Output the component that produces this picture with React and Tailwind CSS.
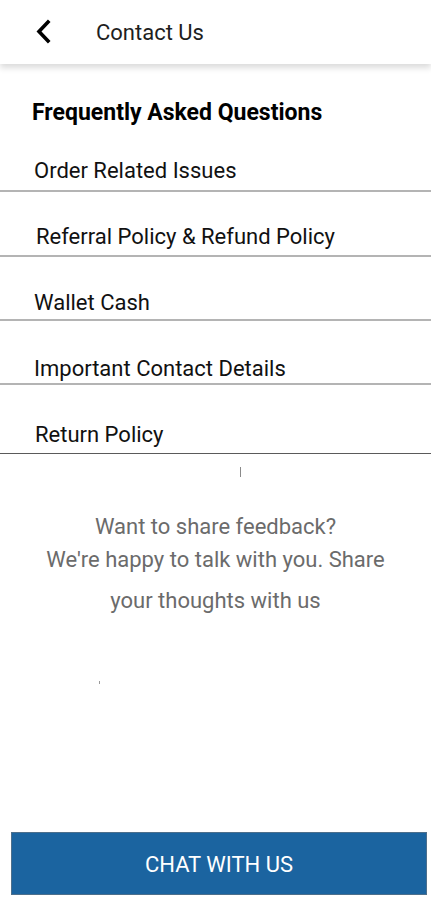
import React from "react";

const faqs = [
  { label: "Order Related Issues", cls: "pt-[30px] pb-[5px] pl-[34px] border-b-2 border-[#b4b4b4]" },
  { label: "Referral Policy & Refund Policy", cls: "pt-[31px] pb-[4px] pl-[36px] border-b-2 border-[#b4b4b4]" },
  { label: "Wallet Cash", cls: "pt-[32px] pb-[2px] pl-[34px] border-b-2 border-[#b4b4b4]" },
  { label: "Important Contact Details", cls: "pt-[34px] pb-0 pl-[34px] border-b-2 border-[#b4b4b4]" },
  { label: "Return Policy", cls: "pt-[36px] pb-[4px] pl-[35px] border-b border-[#5a5a5a]" },
];

export default function App() {
  return (
    <div
      className="min-h-[907px] w-[431px] flex flex-col bg-white"
      style={{ fontFamily: "Roboto, 'Liberation Sans', sans-serif" }}
    >
      {/* top bar */}
      <div className="h-[64px] flex items-center bg-white shadow-[0_4px_6px_rgba(0,0,0,0.14)] relative z-10">
        <button className="ml-[33px] w-[20px] h-[26px] flex items-center justify-center">
          <svg width="20" height="26" viewBox="0 0 20 26">
            <path d="M15 3 L6 12.5 L15 22" fill="none" stroke="#000" strokeWidth="3.6" strokeLinecap="square" />
          </svg>
        </button>
        <span className="ml-[43px] mt-[2px] text-[22px] text-[#1e1e1e] leading-[28px]">Contact Us</span>
      </div>

      <h1 className="mt-[35px] pl-[32px] text-[23px] font-bold leading-[28px] text-black">
        Frequently Asked Questions
      </h1>

      <div className="flex flex-col">
        {faqs.map((item, i) => (
          <div key={i} className={item.cls}>
            <span className="block text-[22px] leading-[28px] text-[#111]">{item.label}</span>
          </div>
        ))}
      </div>

      <div className="mt-[13px] ml-[240px] w-px h-[10px] bg-[#8a8a8a]" />

      <div className="mt-[38px] text-center text-[22px] text-[#6b6b6b]">
        <p className="leading-[24px]">Want to share feedback?</p>
        <p className="leading-[41px] px-[40px]">We're happy to talk with you. Share your thoughts with us</p>
      </div>

      <div className="mt-[60px] ml-[99px] w-px h-[3px] bg-[#9a9a9a]" />

      <button className="mt-auto mb-[12px] ml-[11px] w-[416px] h-[63px] pt-[2px] bg-[#1b64a0] border border-[#4d6f8c] text-white text-[22px] flex items-center justify-center">
        CHAT WITH US
      </button>
    </div>
  );
}
